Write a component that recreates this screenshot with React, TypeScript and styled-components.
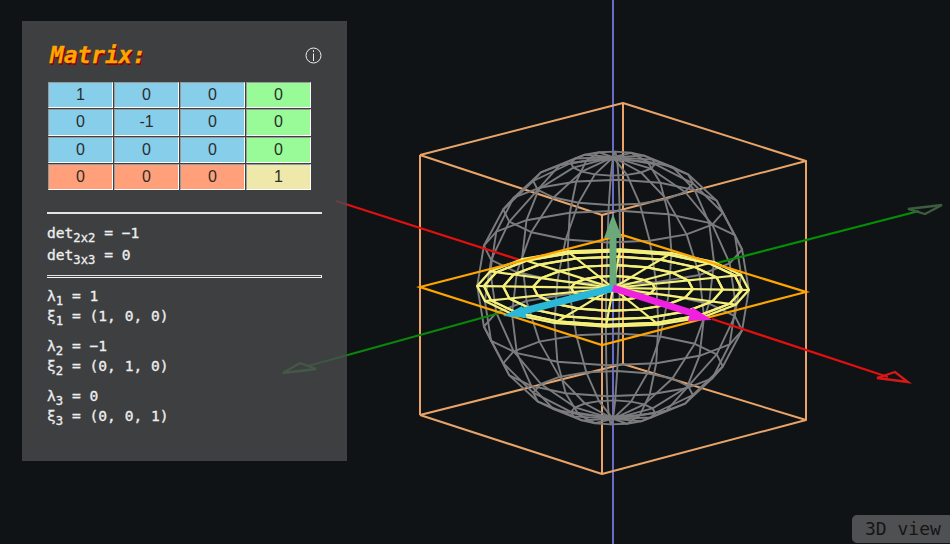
import React from "react";
import styled, { createGlobalStyle } from "styled-components";

const Global = createGlobalStyle`
  html, body { margin: 0; padding: 0; width: 100%; height: 100%; background: #0f1316; overflow: hidden; }
  #root { width: 100%; height: 100%; }
`;

const Stage = styled.div`
  position: relative;
  width: 950px;
  height: 544px;
  overflow: hidden;
  background: #0f1316;
  font-family: "DejaVu Sans Mono", "Liberation Mono", monospace;
`;

const Scene = styled.svg`
  position: absolute;
  inset: 0;
  display: block;
  filter: blur(0.35px);
`;

const Panel = styled.section`
  position: absolute;
  left: 22px;
  top: 21px;
  width: 325px;
  height: 440px;
  box-sizing: border-box;
  padding: 22px 25px 0;
  display: flex;
  flex-direction: column;
  background: rgba(74, 75, 76, 0.8);
  color: #eeeeee;
`;

const Header = styled.header`
  display: flex;
  align-items: center;
  justify-content: space-between;
  height: 25px;
  margin-bottom: 14px;
`;

const Title = styled.h1`
  margin: 0 0 0 3px;
  font-size: 22.8px;
  line-height: 25px;
  font-weight: bold;
  font-style: italic;
  color: #ffa500;
  -webkit-text-stroke: 0.3px #ffa500;
  text-shadow: 1.5px 1.5px 0 #8b0000;
`;

const InfoIcon = styled.svg`
  display: block;
  width: 17px;
  height: 17px;
`;

const MatrixGrid = styled.div`
  display: grid;
  grid-template-columns: repeat(4, 65px);
  grid-auto-rows: 26.33px;
  gap: 1px;
  margin-left: 1px;
`;

const Cell = styled.div<{ $bg: string }>`
  box-sizing: border-box;
  display: flex;
  align-items: center;
  justify-content: center;
  background: ${(p) => p.$bg};
  border: 1px solid;
  border-color: #999 #fff #fff #999;
  color: #2c2c2c;
  font-family: "Liberation Sans", Arial, sans-serif;
  font-size: 16px;
`;

const Rule = styled.hr<{ $top: number; $bottom: number }>`
  width: 100%;
  box-sizing: border-box;
  height: 2px;
  border: 0;
  margin: ${(p) => p.$top}px 0 ${(p) => p.$bottom}px;
  background: #e4e4e4;
`;

const DoubleRule = styled(Rule)`
  height: 3px;
  background: #3e3f41;
  border-top: 1px solid #e4e4e4;
  border-bottom: 1px solid #f4f4f4;
  border-right: 1px solid #f4f4f4;
`;

const Line = styled.div<{ $h: number }>`
  height: ${(p) => p.$h}px;
  line-height: ${(p) => p.$h}px;
  font-size: 14.6px;
  white-space: pre;
  -webkit-text-stroke: 0.3px #eeeeee;
`;

const Sub = styled.sub`
  font-size: 12.2px;
  line-height: 0;
  vertical-align: -4px;
`;

const Group = styled.div`
  margin-bottom: 10px;
`;

const Tag = styled.div`
  position: absolute;
  left: 852px;
  bottom: 1px;
  width: 110px;
  height: 28px;
  box-sizing: border-box;
  padding-left: 13px;
  border-radius: 5px;
  background: #4f5052;
  color: #151515;
  font-size: 18px;
  line-height: 27px;
  white-space: pre;
`;

const CX = 613;
const CY = 288;
const A: [number, number] = [91, 28.8];
const B: [number, number] = [-101, 26];
const Zv = -130.8;

const proj = (x: number, y: number, z: number) =>
  `${(CX + x * A[0] + y * B[0]).toFixed(1)},${(CY + x * A[1] + y * B[1] + z * Zv).toFixed(1)}`;

const N = 16;
const LATS = [-72, -54, -36, -18, 0, 18, 36, 54, 72];
const rad = (d: number) => (d * Math.PI) / 180;

function wire(zScale: number): string[] {
  const out: string[] = [];
  for (const lat of LATS) {
    const r = Math.cos(rad(lat));
    const z = Math.sin(rad(lat)) * zScale;
    const pts: string[] = [];
    for (let k = 0; k <= N; k++) {
      const f = (k * 2 * Math.PI) / N;
      pts.push(proj(r * Math.cos(f), r * Math.sin(f), z));
    }
    out.push(pts.join(" "));
  }
  for (let k = 0; k < N; k++) {
    const f = (k * 2 * Math.PI) / N;
    const pts: string[] = [];
    for (let lat = -90; lat <= 90; lat += 18) {
      const r = Math.cos(rad(lat));
      pts.push(proj(r * Math.cos(f), r * Math.sin(f), Math.sin(rad(lat)) * zScale));
    }
    out.push(pts.join(" "));
  }
  return out;
}

const sphereLines = wire(1);
const discLines = wire(0);

const BOX = [
  "420,155 623,103 806,161 602,215 420,155",
  "420,415 623,364 806,420 602,474 420,415",
  "420,155 420,415",
  "623,103 623,364",
  "806,161 806,420",
  "602,215 602,474",
];

const Wire = ({ lines, color, width }: { lines: string[]; color: string; width: number }) => (
  <g fill="none" stroke={color} strokeWidth={width} strokeLinejoin="round">
    {lines.map((p, i) => (
      <polyline key={i} points={p} />
    ))}
  </g>
);

const MATRIX: [string, string][] = [
  ["1", "#87ceeb"], ["0", "#87ceeb"], ["0", "#87ceeb"], ["0", "#98fb98"],
  ["0", "#87ceeb"], ["-1", "#87ceeb"], ["0", "#87ceeb"], ["0", "#98fb98"],
  ["0", "#87ceeb"], ["0", "#87ceeb"], ["0", "#87ceeb"], ["0", "#98fb98"],
  ["0", "#ffa07a"], ["0", "#ffa07a"], ["0", "#ffa07a"], ["1", "#eee8aa"],
];

const EIGEN = [
  { i: "1", v: "1", e: "(1, 0, 0)" },
  { i: "2", v: "−1", e: "(0, 1, 0)" },
  { i: "3", v: "0", e: "(0, 0, 1)" },
];

export default function App() {
  return (
    <Stage>
      <Global />
      <Scene width={950} height={544} viewBox="0 0 950 544">
        <line x1={613} y1={0} x2={613} y2={544} stroke="#6a6ac8" strokeWidth={2} />
        <Wire lines={BOX} color="#eaa468" width={2} />
        <Wire lines={sphereLines} color="#7c7c7e" width={1.9} />
        <g fill="none" strokeWidth={2.3}>
          <line x1={336} y1={201} x2={520} y2={260} stroke="#e01010" />
          <line x1={712} y1={319} x2={888} y2={377} stroke="#e01010" />
          <polygon points="908,382 877,378 895,372" stroke="#d81818" />
          <line x1={717} y1={263} x2={919} y2={211} stroke="#049004" />
          <line x1={503} y1={312} x2={308} y2={366} stroke="#0a860a" />
          <polygon points="942,205 908,209 925,214" stroke="#3f5c40" />
          <polygon points="283,373 300,363 316,369" stroke="#2f8a2f" />
        </g>
        <Wire lines={discLines} color="#f4f078" width={2.2} />
        <polygon points="420,287 622,235 806,292 602,345" fill="none" stroke="#ffa500" strokeWidth={2.2} />
        <line x1={613} y1={288} x2={613} y2={238} stroke="#6ba87a" strokeWidth={7} />
        <polygon points="604,238 622,238 613,214" fill="#6ba87a" />
        <line x1={613} y1={288} x2={520} y2={312} stroke="#2ab8d8" strokeWidth={7} />
        <polygon points="503,316 522,306 527,318" fill="#2ab8d8" />
        <line x1={613} y1={288} x2={695} y2={314} stroke="#f020e0" strokeWidth={7} />
        <polygon points="712,320 692,307 688,321" fill="#f020e0" />
      </Scene>
      <Panel>
        <Header>
          <Title>Matrix:</Title>
          <InfoIcon viewBox="0 0 17 17">
            <circle cx="8.5" cy="8.5" r="7.5" fill="none" stroke="#eee" strokeWidth="1" />
            <line x1="8.5" y1="6.5" x2="8.5" y2="14" stroke="#eee" strokeWidth="1" />
            <line x1="8.5" y1="3.2" x2="8.5" y2="5" stroke="#eee" strokeWidth="1" />
          </InfoIcon>
        </Header>
        <MatrixGrid>
          {MATRIX.map(([v, c], i) => (
            <Cell key={i} $bg={c}>{v}</Cell>
          ))}
        </MatrixGrid>
        <Rule $top={22} $bottom={8} />
        <Line $h={22}>det<Sub>2x2</Sub> = −1</Line>
        <Line $h={22}>det<Sub>3x3</Sub> = 0</Line>
        <DoubleRule $top={9} $bottom={8} />
        {EIGEN.map((g) => (
          <Group key={g.i}>
            <Line $h={20}>λ<Sub>{g.i}</Sub> = {g.v}</Line>
            <Line $h={20}>ξ<Sub>{g.i}</Sub> = {g.e}</Line>
          </Group>
        ))}
      </Panel>
      <Tag>3D view</Tag>
    </Stage>
  );
}
